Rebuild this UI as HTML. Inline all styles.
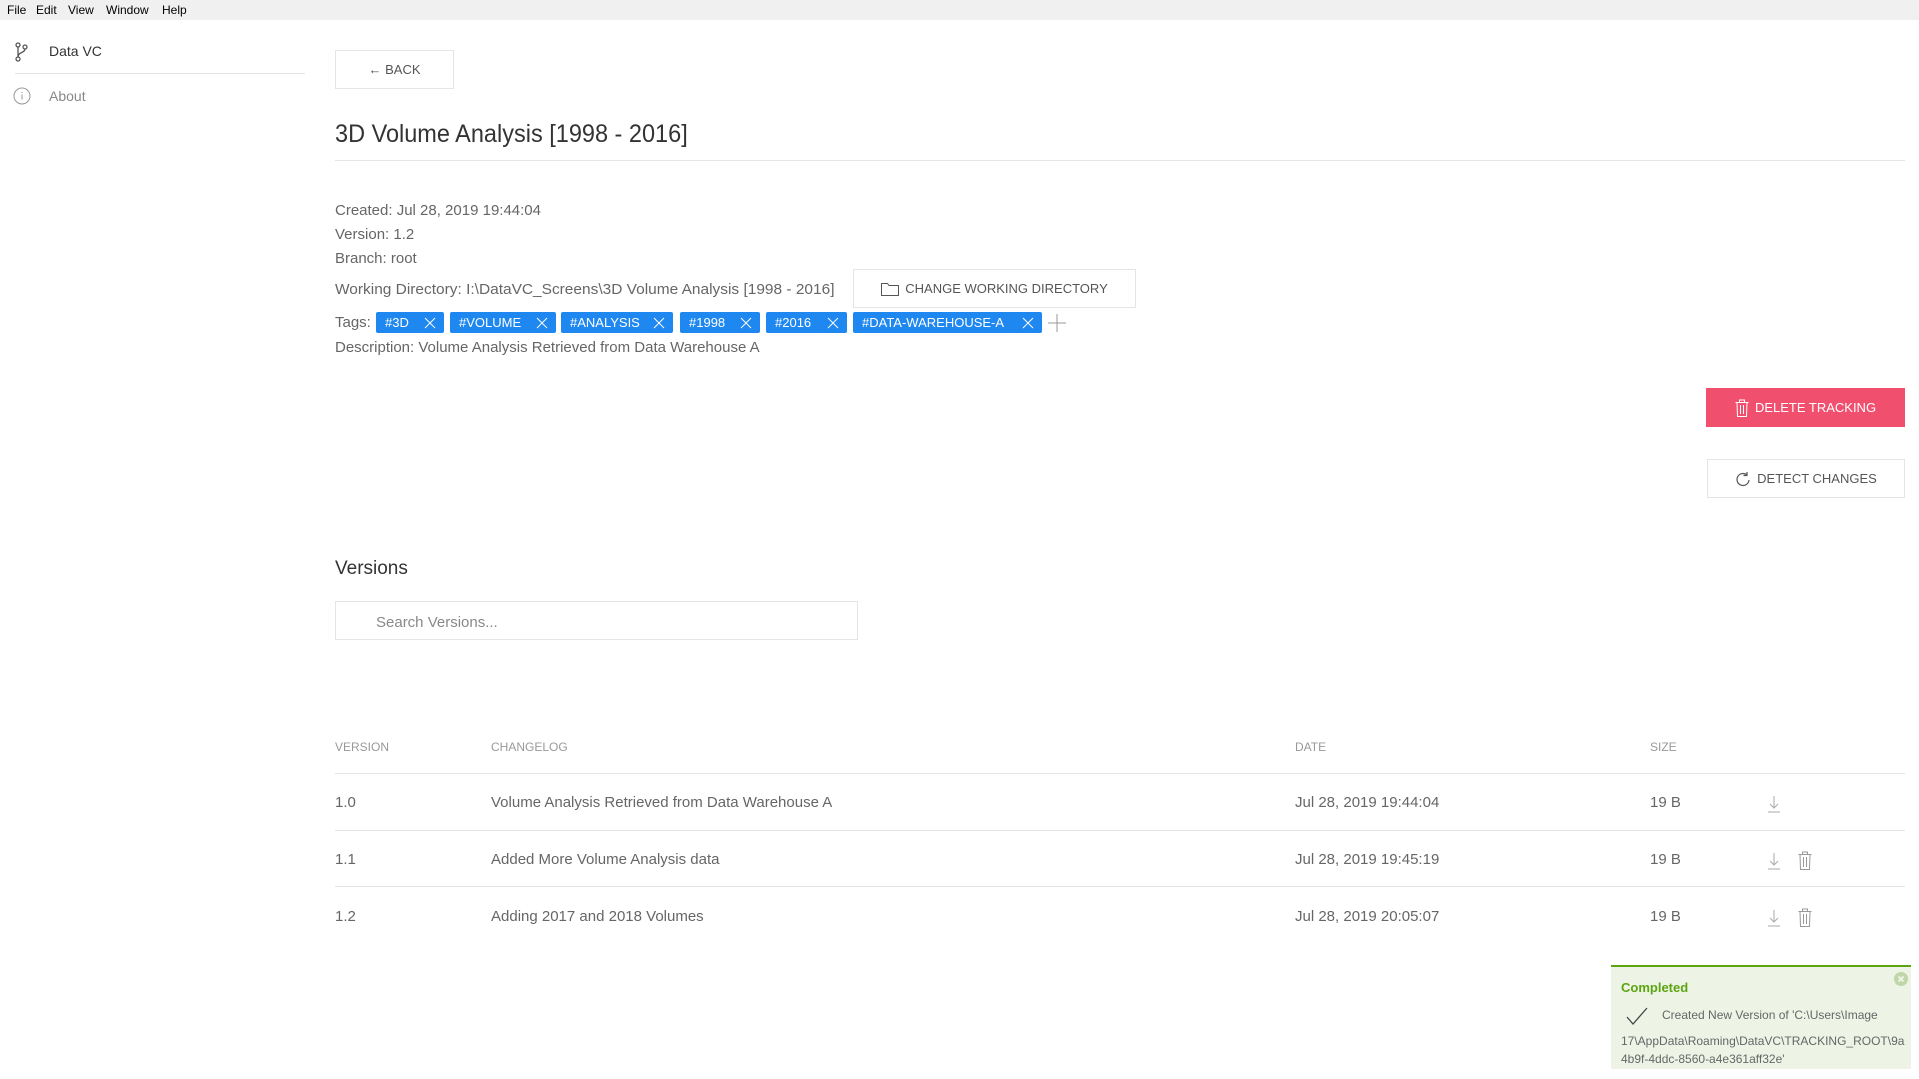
<!DOCTYPE html>
<html><head><meta charset="utf-8"><style>
*{margin:0;padding:0;box-sizing:border-box}
body{width:1919px;height:1079px;background:#fff;font-family:"Liberation Sans",sans-serif;color:#666;position:relative;overflow:hidden}
.a{position:absolute;white-space:nowrap}
.menu{left:0;top:0;width:1919px;height:20px;background:#f0f0f0;font-size:12px;color:#000}
.menu span{position:absolute;top:3px}
.btn{border:1px solid #e5e5e5;background:#fff;color:#555;font-size:13px;display:flex;align-items:center;justify-content:center;gap:6px}
.info{font-size:15px;color:#666;left:335px}
.tag{background:#1e87f0;color:#fff;font-size:13px;height:21px;top:312px;display:flex;align-items:center;padding-left:9px;border-radius:2px}
.tag svg{position:absolute;right:8px;top:5px}
.th{font-size:12px;color:#999;top:740px}
.td{font-size:15px;color:#666}
.line{height:1px;background:#e5e5e5;left:335px;width:1570px}
</style></head><body>
<div class="a menu"><span style="left:7px">File</span><span style="left:36px">Edit</span><span style="left:68px">View</span><span style="left:106px">Window</span><span style="left:162px">Help</span></div>

<svg class="a" style="left:15px;top:42px" width="14" height="20" viewBox="0 0 14 20" fill="none" stroke="#555" stroke-width="1.3"><circle cx="3" cy="3" r="2"/><circle cx="3" cy="17" r="2"/><circle cx="10" cy="5" r="2"/><path d="M3 5v10M10 7c0 4-7 3-7 8"/></svg>
<div class="a" style="left:49px;top:43px;font-size:14px;color:#333">Data VC</div>
<div class="a line" style="left:15px;width:290px;top:73px"></div>
<svg class="a" style="left:13px;top:87px" width="18" height="18" viewBox="0 0 18 18" fill="none" stroke="#999"><circle cx="9" cy="9" r="8"/><path d="M9 7.5v5M9 5v1"/></svg>
<div class="a" style="left:49px;top:88px;font-size:14px;color:#888">About</div>

<div class="a btn" style="left:335px;top:50px;width:119px;height:39px">← BACK</div>
<div class="a" style="left:335px;top:120px;font-size:25px;color:#333;transform:scaleX(0.94);transform-origin:left">3D Volume Analysis [1998 - 2016]</div>
<div class="a line" style="top:160px"></div>

<div class="a info" style="top:202px">Created: Jul 28, 2019 19:44:04</div>
<div class="a info" style="top:226px">Version: 1.2</div>
<div class="a info" style="top:250px">Branch: root</div>
<div class="a info" style="top:281px;transform:scaleX(1.03);transform-origin:left">Working Directory: I:\DataVC_Screens\3D Volume Analysis [1998 - 2016]</div>
<div class="a btn" style="left:853px;top:269px;width:283px;height:39px"><svg width="18" height="14" viewBox="0 0 18 14" fill="none" stroke="#555"><path d="M.5 1.5h6l1.5 2h9.5v10H.5z"/></svg>CHANGE WORKING DIRECTORY</div>
<div class="a info" style="top:314px">Tags:</div>
<div class="a tag" style="left:376px;width:68px">#3D<svg width="12" height="12" stroke="#fff"><path d="M1 1l10 10M11 1L1 11"/></svg></div>
<div class="a tag" style="left:450px;width:106px">#VOLUME<svg width="12" height="12" stroke="#fff"><path d="M1 1l10 10M11 1L1 11"/></svg></div>
<div class="a tag" style="left:561px;width:112px">#ANALYSIS<svg width="12" height="12" stroke="#fff"><path d="M1 1l10 10M11 1L1 11"/></svg></div>
<div class="a tag" style="left:680px;width:80px">#1998<svg width="12" height="12" stroke="#fff"><path d="M1 1l10 10M11 1L1 11"/></svg></div>
<div class="a tag" style="left:766px;width:81px">#2016<svg width="12" height="12" stroke="#fff"><path d="M1 1l10 10M11 1L1 11"/></svg></div>
<div class="a tag" style="left:853px;width:189px">#DATA-WAREHOUSE-A<svg width="12" height="12" stroke="#fff"><path d="M1 1l10 10M11 1L1 11"/></svg></div>
<svg class="a" style="left:1048px;top:314px" width="18" height="18" stroke="#999"><path d="M9 0v18M0 9h18"/></svg>
<div class="a info" style="top:339px">Description: Volume Analysis Retrieved from Data Warehouse A</div>

<div class="a btn" style="left:1706px;top:388px;width:199px;height:39px;background:#f0506e;border-color:#f0506e;color:#fff"><svg width="14" height="18" viewBox="0 0 14 18" fill="none" stroke="#fff"><path d="M.5 3.5h13M4.5 3.5V1h5v2.5M2 3.5l.5 14h9l.5-14M5.5 6v9M8.5 6v9"/></svg>DELETE TRACKING</div>
<div class="a btn" style="left:1707px;top:459px;width:198px;height:39px"><svg width="16" height="16" viewBox="0 0 16 16" fill="none" stroke="#555" stroke-width="1.2"><path d="M12 4A6 6 0 1 0 14 9M12 1v3.5H8.5"/></svg>DETECT CHANGES</div>

<div class="a" style="left:335px;top:558px;font-size:19px;color:#333">Versions</div>
<div class="a" style="left:335px;top:601px;width:523px;height:39px;border:1px solid #e5e5e5"></div>
<div class="a" style="left:376px;top:614px;font-size:15px;color:#888">Search Versions...</div>

<div class="a th" style="left:335px">VERSION</div>
<div class="a th" style="left:491px">CHANGELOG</div>
<div class="a th" style="left:1295px">DATE</div>
<div class="a th" style="left:1650px">SIZE</div>
<div class="a line" style="top:773px"></div>

<div class="a td" style="left:335px;top:794px">1.0</div>
<div class="a td" style="left:491px;top:794px">Volume Analysis Retrieved from Data Warehouse A</div>
<div class="a td" style="left:1295px;top:794px">Jul 28, 2019 19:44:04</div>
<div class="a td" style="left:1650px;top:794px">19 B</div>
<div class="a line" style="top:830px"></div>
<div class="a td" style="left:335px;top:851px">1.1</div>
<div class="a td" style="left:491px;top:851px">Added More Volume Analysis data</div>
<div class="a td" style="left:1295px;top:851px">Jul 28, 2019 19:45:19</div>
<div class="a td" style="left:1650px;top:851px">19 B</div>
<div class="a line" style="top:886px"></div>
<div class="a td" style="left:335px;top:908px">1.2</div>
<div class="a td" style="left:491px;top:908px">Adding 2017 and 2018 Volumes</div>
<div class="a td" style="left:1295px;top:908px">Jul 28, 2019 20:05:07</div>
<div class="a td" style="left:1650px;top:908px">19 B</div>

<svg class="a" style="left:1767px;top:795px" width="14" height="18" fill="none" stroke="#aaa"><path d="M7 1v12M3 9l4 4 4-4M1 17h12"/></svg>
<svg class="a" style="left:1767px;top:852px" width="14" height="18" fill="none" stroke="#aaa"><path d="M7 1v12M3 9l4 4 4-4M1 17h12"/></svg>
<svg class="a" style="left:1767px;top:909px" width="14" height="18" fill="none" stroke="#aaa"><path d="M7 1v12M3 9l4 4 4-4M1 17h12"/></svg>
<svg class="a" style="left:1798px;top:851px" width="14" height="19" viewBox="0 0 14 19" fill="none" stroke="#999"><path d="M.5 3.5h13M4.5 3.5V1h5v2.5M2 3.5l.5 15h9l.5-15M5.5 6v10M8.5 6v10"/></svg>
<svg class="a" style="left:1798px;top:908px" width="14" height="19" viewBox="0 0 14 19" fill="none" stroke="#999"><path d="M.5 3.5h13M4.5 3.5V1h5v2.5M2 3.5l.5 15h9l.5-15M5.5 6v10M8.5 6v10"/></svg>

<div class="a" style="left:1611px;top:965px;width:300px;height:104px;background:#edf4e6;border-top:2px solid #5ca411;overflow:hidden">
<svg class="a" style="left:283px;top:5px" width="14" height="14"><circle cx="7" cy="7" r="7" fill="#bfd6a8"/><path d="M4.5 4.5l5 5M9.5 4.5l-5 5" stroke="#edf4e6" stroke-width="2"/></svg>
<div class="a" style="left:10px;top:13px;font-size:13px;font-weight:bold;color:#5ca411">Completed</div>
<svg class="a" style="left:15px;top:40px" width="22" height="18" fill="none" stroke="#444" stroke-width="1.3"><path d="M1 10l6 7L21 1"/></svg>
<div class="a" style="left:51px;top:41px;font-size:12px;color:#666">Created New Version of 'C:\Users\Image</div>
<div class="a" style="left:10px;top:67px;font-size:12px;color:#666">17\AppData\Roaming\DataVC\TRACKING_ROOT\9a</div>
<div class="a" style="left:10px;top:85px;font-size:12px;color:#666">4b9f-4ddc-8560-a4e361aff32e'</div>
</div>
</body></html>
